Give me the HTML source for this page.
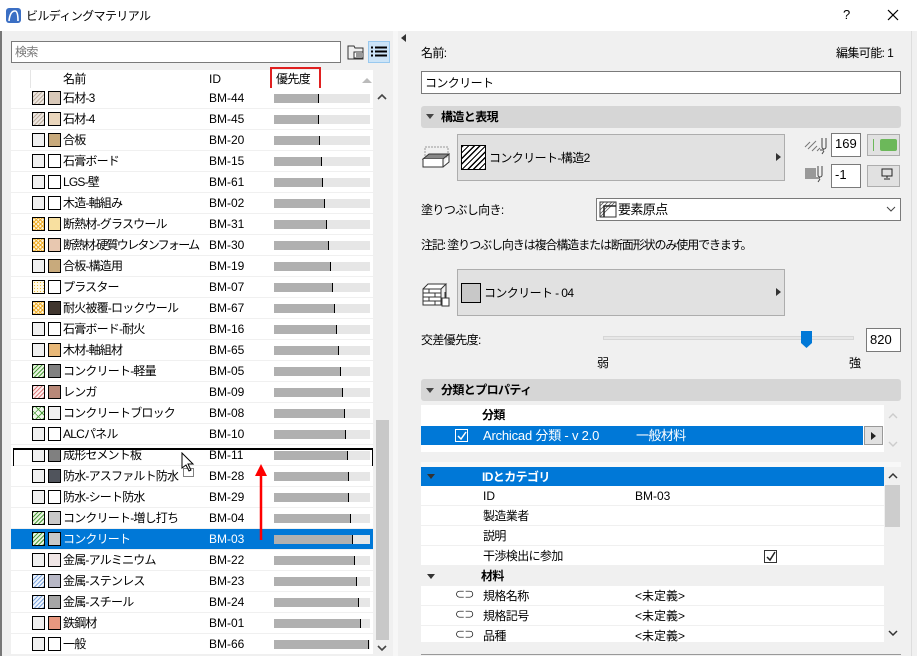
<!DOCTYPE html>
<html><head><meta charset="utf-8"><style>
*{box-sizing:border-box;margin:0;padding:0}
body{width:917px;height:656px;overflow:hidden;background:#f0f0f0;font-family:"Liberation Sans","Noto Sans CJK JP",sans-serif;font-size:12px;color:#000;position:relative;letter-spacing:-0.6px}
.a{position:absolute}
.t{position:absolute;white-space:nowrap;line-height:14px}
.l{letter-spacing:0}
.r{position:absolute;left:11px;width:362px;height:21px;background:#fff;border-bottom:1px solid #f0f0f0}
.r .c1{position:absolute;left:21px;top:3px;width:13px;height:14px;border:1px solid #000;background:#f0f0f0}
.r .c2{position:absolute;left:37px;top:3px;width:13px;height:14px;border:1px solid #000;background:#fff}
.r .n{position:absolute;left:52px;top:3px;line-height:14px;white-space:nowrap;letter-spacing:-0.8px}
.r .i{position:absolute;left:198px;top:3px;line-height:14px;letter-spacing:0}
.r .b{position:absolute;left:263px;top:6px;width:96px;height:9px;background:#e6e6e6}
.r .b i{position:absolute;left:0;top:0;height:9px;background:#b0b0b0;border-right:1.5px solid #000}
.ht{background:repeating-linear-gradient(135deg,#c0b0a0 0 1px,#ece6e0 1px 3px)!important}
.hy{background:repeating-linear-gradient(45deg,#f0b030 0 1px,transparent 1px 3px),repeating-linear-gradient(135deg,#f0b030 0 1px,#fff4d8 1px 3px)!important}
.hd{background:radial-gradient(#f0c040 0.6px,#fffae8 0.8px) 0 0/3px 3px!important}
.hg{background:repeating-linear-gradient(135deg,#50a040 0 1px,#e8f4e0 1px 3px)!important}
.hx{background:repeating-linear-gradient(45deg,#50a040 0 1px,transparent 1px 5px),repeating-linear-gradient(135deg,#50a040 0 1px,#f0f8ec 1px 5px)!important}
.hr{background:repeating-linear-gradient(135deg,#e08080 0 1px,#fcecec 1px 3px)!important}
.hb{background:repeating-linear-gradient(135deg,#80a8e0 0 1px,#eef4fc 1px 3px)!important}
.sec{position:absolute;left:421px;width:480px;height:22px;background:#d6d6d6;border-radius:3px;font-weight:bold}
.pr{position:absolute;left:421px;width:463px;height:20px;background:#fff;border-bottom:1px solid #f0f0f0}
.pr span{position:absolute;top:3px;line-height:14px;white-space:nowrap}
</style></head><body>
<div class="a" style="left:0;top:0;width:917px;height:31px;background:#fff"></div>
<div class="a" style="left:6px;top:8px;width:15px;height:15px;background:#3b6fc4;border-radius:3px"></div>
<svg class="a" style="left:6px;top:8px" width="15" height="15"><path d="M3 13 Q4 3 9 3 Q12 3 12 13" stroke="#fff" stroke-width="1.6" fill="none"/></svg>
<div class="t" style="left:26px;top:9px">ビルディングマテリアル</div>
<div class="t" style="left:843px;top:8px;font-size:13px">?</div>
<svg class="a" style="left:887px;top:9px" width="12" height="12"><path d="M1 1l10 10M11 1L1 11" stroke="#000" stroke-width="1.2"/></svg>
<div class="a" style="left:0;top:31px;width:2px;height:625px;background:#777"></div>

<div class="a" style="left:11px;top:41px;width:330px;height:22px;background:#fff;border:1px solid #7a7a7a"></div>
<div class="t" style="left:15px;top:45px;color:#777">検索</div>
<svg class="a" style="left:347px;top:44px" width="18" height="16"><path d="M1 2h6l1 2h8v11H1z" fill="none" stroke="#333"/><rect x="7" y="8" width="9" height="6" fill="#fff" stroke="#333"/><path d="M9 10h6M9 12h6" stroke="#333"/></svg>
<div class="a" style="left:368px;top:41px;width:22px;height:22px;background:#cce4f7;border:1px solid #99c9ef"></div>
<svg class="a" style="left:371px;top:46px" width="16" height="12"><path d="M0 1.5h2M4 1.5h12M0 5.5h2M4 5.5h12M0 9.5h2M4 9.5h12" stroke="#000" stroke-width="2"/></svg>

<div class="a" style="left:11px;top:70px;width:362px;height:18px;background:#fff"></div>
<div class="a" style="left:30px;top:70px;width:1px;height:18px;background:#e5e5e5"></div>
<div class="t" style="left:63px;top:72px">名前</div>
<div class="t l" style="left:209px;top:72px">ID</div>
<div class="a" style="left:270px;top:67px;width:51px;height:25px;border:2px solid #e02020"></div>
<div class="t" style="left:276px;top:72px">優先度</div>
<svg class="a" style="left:362px;top:77px" width="10" height="6"><path d="M0 6L5 1L10 6z" fill="#bbb"/></svg>

<div class="a" style="left:373px;top:88px;width:17px;height:568px;background:#f0f0f0"></div>
<div class="a" style="left:376px;top:420px;width:13px;height:220px;background:#c8c8c8"></div>
<svg class="a" style="left:377px;top:93px" width="10" height="8"><path d="M1 6L5 2L9 6" stroke="#444" stroke-width="1.6" fill="none"/></svg>
<svg class="a" style="left:377px;top:644px" width="10" height="8"><path d="M1 2L5 6L9 2" stroke="#444" stroke-width="1.6" fill="none"/></svg>
<div class="a" style="left:393px;top:31px;width:5px;height:625px;background:#f7f7f7"></div>
<svg class="a" style="left:401px;top:34px" width="6" height="8"><path d="M5 0L0 4L5 8z" fill="#333"/></svg>

<div class="r" style="top:88px"><div class="c1 ht"></div><div class="c2" style="background:#d8c8b8"></div><div class="n">石材-3</div><div class="i">BM-44</div><div class="b"><i style="width:45px"></i></div></div>
<div class="r" style="top:109px"><div class="c1 ht"></div><div class="c2" style="background:#ead6bc"></div><div class="n">石材-4</div><div class="i">BM-45</div><div class="b"><i style="width:45px"></i></div></div>
<div class="r" style="top:130px"><div class="c1"></div><div class="c2" style="background:#c8aa7c"></div><div class="n">合板</div><div class="i">BM-20</div><div class="b"><i style="width:46px"></i></div></div>
<div class="r" style="top:151px"><div class="c1"></div><div class="c2"></div><div class="n">石膏ボード</div><div class="i">BM-15</div><div class="b"><i style="width:48px"></i></div></div>
<div class="r" style="top:172px"><div class="c1"></div><div class="c2"></div><div class="n">LGS-壁</div><div class="i">BM-61</div><div class="b"><i style="width:49px"></i></div></div>
<div class="r" style="top:193px"><div class="c1"></div><div class="c2"></div><div class="n">木造-軸組み</div><div class="i">BM-02</div><div class="b"><i style="width:51px"></i></div></div>
<div class="r" style="top:214px"><div class="c1 hy"></div><div class="c2" style="background:#f8e0a0"></div><div class="n">断熱材-グラスウール</div><div class="i">BM-31</div><div class="b"><i style="width:53px"></i></div></div>
<div class="r" style="top:235px"><div class="c1 hy"></div><div class="c2" style="background:#e8c8b0"></div><div class="n" style="letter-spacing:-1.7px">断熱材-硬質ウレタンフォーム</div><div class="i">BM-30</div><div class="b"><i style="width:55px"></i></div></div>
<div class="r" style="top:256px"><div class="c1"></div><div class="c2" style="background:#c8aa7c"></div><div class="n">合板-構造用</div><div class="i">BM-19</div><div class="b"><i style="width:57px"></i></div></div>
<div class="r" style="top:277px"><div class="c1 hd"></div><div class="c2"></div><div class="n">プラスター</div><div class="i">BM-07</div><div class="b"><i style="width:59px"></i></div></div>
<div class="r" style="top:298px"><div class="c1 hy"></div><div class="c2" style="background:#40362e"></div><div class="n">耐火被覆-ロックウール</div><div class="i">BM-67</div><div class="b"><i style="width:61px"></i></div></div>
<div class="r" style="top:319px"><div class="c1"></div><div class="c2"></div><div class="n">石膏ボード-耐火</div><div class="i">BM-16</div><div class="b"><i style="width:63px"></i></div></div>
<div class="r" style="top:340px"><div class="c1"></div><div class="c2" style="background:#e8b878"></div><div class="n">木材-軸組材</div><div class="i">BM-65</div><div class="b"><i style="width:65px"></i></div></div>
<div class="r" style="top:361px"><div class="c1 hg"></div><div class="c2" style="background:#808080"></div><div class="n">コンクリート-軽量</div><div class="i">BM-05</div><div class="b"><i style="width:67px"></i></div></div>
<div class="r" style="top:382px"><div class="c1 hr"></div><div class="c2" style="background:#b88878"></div><div class="n">レンガ</div><div class="i">BM-09</div><div class="b"><i style="width:69px"></i></div></div>
<div class="r" style="top:403px"><div class="c1 hx"></div><div class="c2" style="background:#f0f0f0"></div><div class="n">コンクリートブロック</div><div class="i">BM-08</div><div class="b"><i style="width:71px"></i></div></div>
<div class="r" style="top:424px"><div class="c1"></div><div class="c2"></div><div class="n">ALCパネル</div><div class="i">BM-10</div><div class="b"><i style="width:72px"></i></div></div>
<div class="r" style="top:445px"><div class="c1"></div><div class="c2" style="background:#808080"></div><div class="n">成形セメント板</div><div class="i">BM-11</div><div class="b"><i style="width:74px"></i></div></div>
<div class="a" style="left:13px;top:448px;width:360px;height:20px;border:1.5px solid #000;border-top-width:2px"></div>
<div class="r" style="top:466px"><div class="c1"></div><div class="c2" style="background:#50545c"></div><div class="n">防水-アスファルト防水</div><div class="i">BM-28</div><div class="b"><i style="width:75px"></i></div></div>
<div class="r" style="top:487px"><div class="c1"></div><div class="c2"></div><div class="n">防水-シート防水</div><div class="i">BM-29</div><div class="b"><i style="width:75px"></i></div></div>
<div class="r" style="top:508px"><div class="c1 hg"></div><div class="c2" style="background:#c8c8c8"></div><div class="n">コンクリート-増し打ち</div><div class="i">BM-04</div><div class="b"><i style="width:77px"></i></div></div>
<div class="r" style="top:529px;background:#0078d7;color:#fff"><div class="c1 hg"></div><div class="c2" style="background:#c8c8c8"></div><div class="n">コンクリート</div><div class="i">BM-03</div><div class="b" style="background:#e6e6e6"><i style="width:79px"></i></div></div>
<div class="r" style="top:550px"><div class="c1"></div><div class="c2" style="background:#f0e6e6"></div><div class="n">金属-アルミニウム</div><div class="i">BM-22</div><div class="b"><i style="width:81px"></i></div></div>
<div class="r" style="top:571px"><div class="c1 hb"></div><div class="c2" style="background:#b8b8c6"></div><div class="n">金属-ステンレス</div><div class="i">BM-23</div><div class="b"><i style="width:83px"></i></div></div>
<div class="r" style="top:592px"><div class="c1 hb"></div><div class="c2" style="background:#a6a6a6"></div><div class="n">金属-スチール</div><div class="i">BM-24</div><div class="b"><i style="width:85px"></i></div></div>
<div class="r" style="top:613px"><div class="c1"></div><div class="c2" style="background:#e89880"></div><div class="n">鉄鋼材</div><div class="i">BM-01</div><div class="b"><i style="width:87px"></i></div></div>
<div class="r" style="top:634px"><div class="c1"></div><div class="c2"></div><div class="n">一般</div><div class="i">BM-66</div><div class="b"><i style="width:95px"></i></div></div>
<svg class="a" style="left:180px;top:452px" width="16" height="26"><path d="M2 1v15l4-3 3 6 2-1-3-6h5z" fill="#fff" stroke="#000"/><rect x="3.5" y="16.5" width="10" height="8" fill="none" stroke="#000" stroke-dasharray="1 1"/></svg>
<svg class="a" style="left:254px;top:462px" width="14" height="78"><path d="M7 78V10" stroke="#f00" stroke-width="2.5"/><path d="M1 14L7 2L13 14z" fill="#f00"/></svg>

<div class="t" style="left:421px;top:46px">名前:</div>
<div class="t" style="left:836px;top:46px">編集可能: 1</div>
<div class="a" style="left:421px;top:71px;width:480px;height:23px;background:#fff;border:1px solid #7a7a7a"></div>
<div class="t" style="left:425px;top:76px">コンクリート</div>
<div class="sec" style="top:106px"></div>
<svg class="a" style="left:426px;top:114px" width="8" height="5"><path d="M0 0h8L4 5z" fill="#444"/></svg>
<div class="t" style="left:441px;top:110px;font-weight:bold">構造と表現</div>
<svg class="a" style="left:422px;top:145px" width="28" height="28"><rect x="3" y="2" width="23" height="10" fill="none" stroke="#999" stroke-dasharray="2 1"/><path d="M1 14h20l6-5H7z" fill="#888" stroke="#333"/><path d="M1 14v8h20v-8M21 22l6-5V9" fill="#fff" stroke="#333"/></svg>
<div class="a" style="left:457px;top:134px;width:328px;height:47px;background:#e1e1e1;border:1px solid #adadad"></div>
<div class="a" style="left:461px;top:145px;width:25px;height:25px;border:1px solid #000;background:repeating-linear-gradient(135deg,#000 0 1.3px,#fff 1.3px 4px)"></div>
<div class="t" style="left:489px;top:151px">コンクリート-構造2</div>
<svg class="a" style="left:776px;top:153px" width="5" height="8"><path d="M0 0L5 4L0 8z" fill="#333"/></svg>
<svg class="a" style="left:804px;top:135px" width="24" height="26"><path d="M1 12l5-5M4 14l8-8M8 16l5-5M13 16l3-3" stroke="#777"/><path d="M16 15h4M18 3v9a2 2 0 0 0 4 0V3" stroke="#444" fill="none"/><path d="M20 16l-2 3" stroke="#444"/></svg>
<div class="a" style="left:831px;top:133px;width:30px;height:24px;background:#fff;border:1px solid #7a7a7a"></div>
<div class="t l" style="left:835px;top:137px;font-size:13px">169</div>
<div class="a" style="left:867px;top:134px;width:33px;height:22px;background:#e1e1e1;border:1px solid #adadad"></div>
<div class="a" style="left:873px;top:139px;width:1px;height:12px;background:#6cb85a"></div>
<div class="a" style="left:880px;top:139px;width:17px;height:12px;background:#6cb85a;border-radius:2px"></div>
<div class="a" style="left:805px;top:168px;width:11px;height:11px;background:#999"></div>
<svg class="a" style="left:816px;top:164px" width="12" height="20"><path d="M0 14h4M2 2v9a2 2 0 0 0 4 0V2" stroke="#444" fill="none"/><path d="M4 15l-2 3" stroke="#444"/></svg>
<div class="a" style="left:831px;top:164px;width:30px;height:24px;background:#fff;border:1px solid #7a7a7a"></div>
<div class="t l" style="left:835px;top:168px;font-size:13px">-1</div>
<div class="a" style="left:867px;top:165px;width:33px;height:22px;background:#e1e1e1;border:1px solid #adadad"></div>
<svg class="a" style="left:881px;top:168px" width="12" height="12"><rect x="1" y="1" width="10" height="7" fill="none" stroke="#222"/><path d="M6 8v2M3 11h6" stroke="#222"/></svg>
<div class="t" style="left:421px;top:203px">塗りつぶし向き:</div>
<div class="a" style="left:596px;top:198px;width:305px;height:23px;background:#fff;border:1px solid #7a7a7a"></div>
<svg class="a" style="left:599px;top:201px" width="18" height="17"><rect x="1" y="1" width="16" height="15" fill="none" stroke="#333"/><path d="M1 5l4-4M1 9l8-8M1 13l12-12M1 16l15-15" stroke="#555" stroke-width=".8"/><path d="M5 16V5h12" stroke="#222" stroke-width="1.5" fill="none"/></svg>
<div class="t" style="left:618px;top:203px;font-size:13px">要素原点</div>
<svg class="a" style="left:886px;top:206px" width="10" height="6"><path d="M1 1l4 4 4-4" stroke="#444" fill="none"/></svg>
<div class="t" style="left:421px;top:238px;letter-spacing:-1.1px">注記: 塗りつぶし向きは複合構造または断面形状のみ使用できます。</div>
<svg class="a" style="left:422px;top:279px" width="30" height="30"><path d="M1 10h18v16H1zM1 14h18M1 18h18M1 22h18M7 10v4M13 14v4M7 18v4M13 22v4M1 10l5-5h18l-5 5M24 5v14" stroke="#333" fill="#fff"/><rect x="20" y="19" width="7" height="8" fill="#fff" stroke="#333"/><path d="M23 13v6" stroke="#333"/></svg>
<div class="a" style="left:457px;top:269px;width:328px;height:47px;background:#e1e1e1;border:1px solid #adadad"></div>
<div class="a" style="left:461px;top:283px;width:20px;height:20px;border:1px solid #000;background:#c8c8c8"></div>
<div class="t" style="left:484px;top:286px">コンクリート - 04</div>
<svg class="a" style="left:776px;top:288px" width="5" height="8"><path d="M0 0L5 4L0 8z" fill="#333"/></svg>
<div class="t" style="left:421px;top:333px">交差優先度:</div>
<div class="a" style="left:603px;top:336px;width:251px;height:4px;background:#e7e7e7;border:1px solid #d6d6d6"></div>
<svg class="a" style="left:801px;top:331px" width="11" height="17"><path d="M0 0h11v12l-5.5 5L0 12z" fill="#0078d7"/></svg>
<div class="a" style="left:866px;top:328px;width:35px;height:24px;background:#fff;border:1px solid #7a7a7a"></div>
<div class="t l" style="left:870px;top:333px;font-size:13px">820</div>
<div class="t" style="left:597px;top:356px">弱</div>
<div class="t" style="left:849px;top:356px">強</div>

<div class="sec" style="top:379px"></div>
<svg class="a" style="left:426px;top:388px" width="8" height="5"><path d="M0 0h8L4 5z" fill="#444"/></svg>
<div class="t" style="left:441px;top:383px;font-weight:bold">分類とプロパティ</div>
<div class="a" style="left:421px;top:405px;width:463px;height:47px;background:#fff"></div>
<div class="t" style="left:482px;top:408px;font-weight:bold">分類</div>
<div class="a" style="left:421px;top:426px;width:442px;height:19px;background:#0078d7"></div>
<div class="a" style="left:455px;top:429px;width:13px;height:13px;border:1px solid #fff"></div>
<svg class="a" style="left:456px;top:430px" width="12" height="12"><path d="M2 6l3 3 5-7" stroke="#fff" stroke-width="1.5" fill="none"/></svg>
<div class="t" style="left:483px;top:429px;color:#fff;font-size:13px;letter-spacing:-0.2px">Archicad 分類 - v 2.0</div>
<div class="t" style="left:636px;top:429px;color:#fff;font-size:13px">一般材料</div>
<div class="a" style="left:864px;top:426px;width:19px;height:19px;background:#e1e1e1;border:1px solid #999"></div>
<svg class="a" style="left:871px;top:432px" width="5" height="8"><path d="M0 0L5 4L0 8z" fill="#222"/></svg>
<svg class="a" style="left:888px;top:412px" width="10" height="8"><path d="M1 6L5 2L9 6" stroke="#ccc" stroke-width="1.4" fill="none"/></svg>
<svg class="a" style="left:888px;top:440px" width="10" height="8"><path d="M1 2L5 6L9 2" stroke="#ccc" stroke-width="1.4" fill="none"/></svg>
<div class="a" style="left:421px;top:462px;width:480px;height:5px;background:#f8f8f8"></div>
<div class="a" style="left:421px;top:467px;width:463px;height:19px;background:#0078d7"></div>
<svg class="a" style="left:427px;top:474px" width="8" height="5"><path d="M0 0h8L4 5z" fill="#333"/></svg>
<div class="t" style="left:482px;top:470px;color:#fff;font-weight:bold">IDとカテゴリ</div>
<div class="pr" style="top:486px"><span style="left:62px;letter-spacing:0">ID</span><span style="left:214px;letter-spacing:0">BM-03</span></div>
<div class="pr" style="top:506px"><span style="left:62px">製造業者</span></div>
<div class="pr" style="top:526px"><span style="left:62px">説明</span></div>
<div class="pr" style="top:546px"><span style="left:62px">干渉検出に参加</span></div>
<div class="a" style="left:764px;top:550px;width:13px;height:13px;border:1px solid #333;background:#fff"></div>
<svg class="a" style="left:765px;top:551px" width="12" height="12"><path d="M2 6l3 3 5-8" stroke="#222" stroke-width="1.5" fill="none"/></svg>
<div class="pr" style="top:566px;background:#f0f0f0"><svg class="a" style="left:6px;top:8px" width="8" height="5"><path d="M0 0h8L4 5z" fill="#333"/></svg><span style="left:60px;font-weight:bold">材料</span></div>
<div class="pr" style="top:586px"><span style="left:34px;font-size:10px">⊂⊃</span><span style="left:62px">規格名称</span><span style="left:214px;letter-spacing:0">&lt;未定義&gt;</span></div>
<div class="pr" style="top:606px"><span style="left:34px;font-size:10px">⊂⊃</span><span style="left:62px">規格記号</span><span style="left:214px;letter-spacing:0">&lt;未定義&gt;</span></div>
<div class="pr" style="top:626px;height:17px"><span style="left:34px;font-size:10px">⊂⊃</span><span style="left:62px">品種</span><span style="left:214px;letter-spacing:0">&lt;未定義&gt;</span></div>
<div class="a" style="left:885px;top:485px;width:15px;height:42px;background:#cdcdcd"></div>
<svg class="a" style="left:888px;top:472px" width="10" height="8"><path d="M1 6L5 2L9 6" stroke="#333" stroke-width="1.5" fill="none"/></svg>
<svg class="a" style="left:888px;top:629px" width="10" height="8"><path d="M1 2L5 6L9 2" stroke="#333" stroke-width="1.5" fill="none"/></svg>
<div class="a" style="left:421px;top:654px;width:480px;height:1px;background:#999"></div>
<div class="a" style="left:911px;top:31px;width:1px;height:625px;background:#ddd"></div>
</body></html>
